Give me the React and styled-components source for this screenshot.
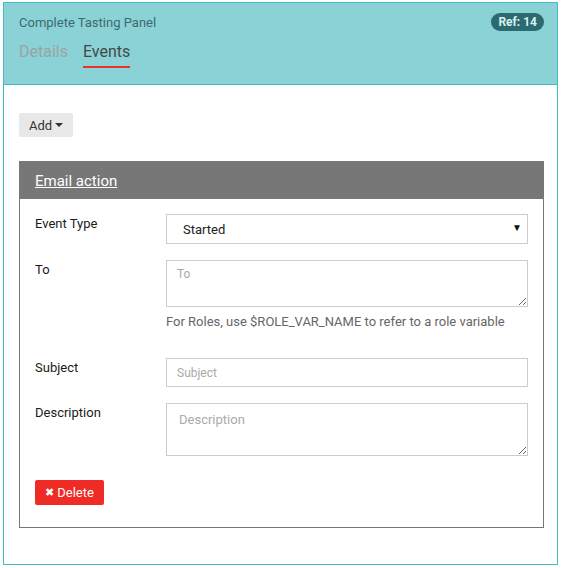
import React from 'react';
import styled, { createGlobalStyle } from 'styled-components';

const TEAL = '#3fbcc6';
const HEADER_BG = '#8ad2d6';
const CARD_GRAY = '#777777';
const INPUT_BORDER = '#cccccc';

const GlobalStyle = createGlobalStyle`
  body {
    margin: 0;
    background: #ffffff;
    font-family: Roboto, "Liberation Sans", Arial, sans-serif;
  }
  * {
    box-sizing: border-box;
  }
`;

const Page = styled.div`
  padding: 2px 4px 3px 3px;
`;

const Panel = styled.div`
  border: 1px solid ${TEAL};
  background-color: #ffffff;
`;

const Header = styled.div`
  background-color: ${HEADER_BG};
  border-bottom: 1px solid ${TEAL};
  padding: 10px 13px 16px 15px;
`;

const TitleRow = styled.div`
  display: flex;
  justify-content: space-between;
  align-items: center;
  height: 18px;
`;

const Title = styled.div`
  font-size: 13px;
  color: #3d6a6e;
`;

const Badge = styled.span`
  background-color: #2b6b6f;
  color: #d8f0f1;
  font-size: 12px;
  font-weight: 700;
  line-height: 18px;
  padding: 0 7px;
  border-radius: 9px;
`;

const Tabs = styled.div`
  display: flex;
  gap: 15px;
  margin-top: 11px;
`;

const Tab = styled.div`
  font-size: 16px;
  line-height: 20px;
  padding-bottom: 4px;
  color: ${(p) => (p.active ? '#44484a' : '#9aa3a4')};
  border-bottom: 2px solid ${(p) => (p.active ? '#e8322b' : 'transparent')};
`;

const Body = styled.div`
  padding: 28px 13px 36px 15px;
`;

const AddButton = styled.button`
  display: inline-flex;
  align-items: center;
  gap: 3px;
  height: 24px;
  padding: 0 10px;
  border: none;
  border-radius: 2px;
  background-color: #e8e8e8;
  color: #333333;
  font-family: inherit;
  font-size: 13px;
`;

const Caret = styled.span`
  width: 0;
  height: 0;
  border-left: 4px solid transparent;
  border-right: 4px solid transparent;
  border-top: 4px solid #333333;
`;

const Card = styled.div`
  margin-top: 24px;
  border: 1px solid ${CARD_GRAY};
`;

const CardHeader = styled.div`
  background-color: ${CARD_GRAY};
  height: 37px;
  display: flex;
  align-items: center;
  padding-left: 15px;
`;

const CardTitle = styled.a`
  color: #ffffff;
  font-size: 15px;
  text-decoration: underline;
`;

const CardBody = styled.div`
  padding: 15px 15px 22px 15px;
`;

const Row = styled.div`
  display: grid;
  grid-template-columns: 131px 1fr;
  margin-bottom: 16px;
`;

const Label = styled.label`
  font-size: 13px;
  font-weight: 400;
  color: #1a1a1a;
  padding-top: 2px;
`;

const Field = styled.div`
  display: flex;
  flex-direction: column;
`;

const SelectWrap = styled.div`
  position: relative;
`;

const Select = styled.select`
  appearance: none;
  width: 100%;
  height: 30px;
  border: 1px solid ${INPUT_BORDER};
  background: #ffffff;
  padding: 0 16px;
  font-family: inherit;
  font-size: 13px;
  color: #222222;
`;

const Arrow = styled.span`
  position: absolute;
  right: 6px;
  top: 8px;
  font-size: 10px;
  color: #111111;
  pointer-events: none;
`;

const Input = styled.input`
  width: 100%;
  height: 29px;
  border: 1px solid ${INPUT_BORDER};
  padding: 0 10px;
  font-family: inherit;
  font-size: 12px;
  color: #222222;

  &::placeholder {
    color: #aaaaaa;
  }
`;

const TextArea = styled.textarea`
  width: 100%;
  height: ${(p) => p.h}px;
  border: 1px solid ${INPUT_BORDER};
  padding: ${(p) => p.pad};
  font-family: inherit;
  font-size: ${(p) => p.fs}px;
  color: #222222;
  display: block;

  &::placeholder {
    color: #aaaaaa;
  }
`;

const Help = styled.div`
  margin: 6px 0 11px;
  font-size: 13px;
  line-height: 18px;
  color: #666666;
`;

const DeleteButton = styled.button`
  display: inline-flex;
  align-items: center;
  gap: 3px;
  margin-top: 8px;
  height: 25px;
  padding: 0 10px;
  border: none;
  border-radius: 2px;
  background-color: #ee2b24;
  color: #ffffff;
  font-family: inherit;
  font-size: 13px;
  font-weight: 400;
`;

const CrossIcon = styled.span`
  font-family: "DejaVu Sans", sans-serif;
  font-size: 11px;
  line-height: 1;
`;

const App = () => {
  return (
    <>
      <GlobalStyle />
      <Page>
        <Panel>
          <Header>
            <TitleRow>
              <Title>Complete Tasting Panel</Title>
              <Badge>Ref: 14</Badge>
            </TitleRow>
            <Tabs>
              <Tab>Details</Tab>
              <Tab active>Events</Tab>
            </Tabs>
          </Header>
          <Body>
            <AddButton>
              Add <Caret />
            </AddButton>
            <Card>
              <CardHeader>
                <CardTitle>Email action</CardTitle>
              </CardHeader>
              <CardBody>
                <Row>
                  <Label>Event Type</Label>
                  <SelectWrap>
                    <Select defaultValue="Started">
                      <option>Started</option>
                      <option>Completed</option>
                    </Select>
                    <Arrow>▼</Arrow>
                  </SelectWrap>
                </Row>
                <Row>
                  <Label>To</Label>
                  <Field>
                    <TextArea h={47} pad="6px 10px" fs={12} placeholder="To" />
                    <Help>For Roles, use $ROLE_VAR_NAME to refer to a role variable</Help>
                  </Field>
                </Row>
                <Row>
                  <Label>Subject</Label>
                  <Input placeholder="Subject" />
                </Row>
                <Row>
                  <Label>Description</Label>
                  <TextArea h={53} pad="8px 12px" fs={13} placeholder="Description" />
                </Row>
                <DeleteButton>
                  <CrossIcon>✖</CrossIcon> Delete
                </DeleteButton>
              </CardBody>
            </Card>
          </Body>
        </Panel>
      </Page>
    </>
  );
};

export default App;
